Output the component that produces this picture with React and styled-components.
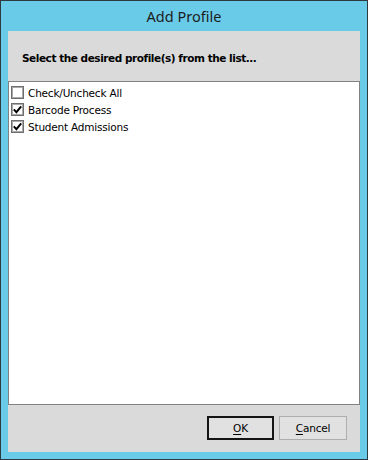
import styled, { createGlobalStyle } from "styled-components";

const GlobalStyle = createGlobalStyle`
  html, body {
    margin: 0;
    padding: 0;
    background: #69cbe8;
  }
  * {
    box-sizing: border-box;
  }
`;

const Window = styled.div`
  width: 368px;
  height: 460px;
  border: 1px solid #2d3b41;
  background: #69cbe8;
  display: flex;
  flex-direction: column;
  padding: 0 7px 7px 7px;
`;

const TitleBar = styled.div`
  height: 30px;
  display: flex;
  align-items: center;
  justify-content: center;
  font-family: "Noto Sans", "Open Sans", sans-serif;
  font-size: 14.5px;
  color: #1c1c1c;
  padding-bottom: 1px;
`;

const Client = styled.div`
  flex: 1;
  display: flex;
  flex-direction: column;
  background: #dadada;
  font-family: "DejaVu Sans", sans-serif;
  font-size: 10.5px;
  letter-spacing: -0.2px;
  color: #000;
`;

const Header = styled.div`
  height: 50px;
  display: flex;
  align-items: center;
  padding: 4px 0 0 14px;
  font-weight: bold;
  letter-spacing: -0.45px;
`;

const ListBox = styled.div`
  flex: 1;
  background: #fff;
  border: 1px solid #828282;
  padding: 2px 0 0 1px;
  display: flex;
  flex-direction: column;
`;

const Row = styled.label`
  height: 17px;
  display: flex;
  align-items: center;
  gap: 4px;
  padding-left: 1px;
`;

const Box = styled.span`
  width: 13px;
  height: 13px;
  border: 1px solid #6e6e6e;
  box-shadow: inset 0 0 0 1px #a9a9a9;
  background: #fff;
  display: flex;
  align-items: center;
  justify-content: center;
`;

const Footer = styled.div`
  height: 47px;
  display: flex;
  justify-content: flex-end;
  align-items: flex-start;
  gap: 5px;
  padding: 11px 13px 0 0;
`;

const Button = styled.button`
  width: ${(p) => (p.$primary ? "67px" : "68px")};
  height: 24px;
  background: #e1e1e1;
  border: ${(p) => (p.$primary ? "2px solid #141414" : "1px solid #adadad")};
  font-family: "DejaVu Sans", sans-serif;
  font-size: 10.5px;
  letter-spacing: -0.2px;
  color: #000;
  padding: 0;
  display: flex;
  align-items: center;
  justify-content: center;

  u {
    text-decoration: underline;
    text-underline-offset: 2px;
  }
`;

const Check = ({ checked }) => (
  <Box>
    {checked && (
      <svg width="9" height="9" viewBox="0 0 9 9">
        <path
          d="M0.8 4.4 L3.4 7.2 L8.2 1.4"
          fill="none"
          stroke="#000"
          strokeWidth="2"
        />
      </svg>
    )}
  </Box>
);

const items = [
  { label: "Check/Uncheck All", checked: false },
  { label: "Barcode Process", checked: true },
  { label: "Student Admissions", checked: true },
];

export default function App() {
  return (
    <>
      <GlobalStyle />
      <Window>
        <TitleBar>Add Profile</TitleBar>
        <Client>
          <Header>Select the desired profile(s) from the list...</Header>
          <ListBox>
            {items.map((it) => (
              <Row key={it.label}>
                <Check checked={it.checked} />
                <span>{it.label}</span>
              </Row>
            ))}
          </ListBox>
          <Footer>
            <Button $primary>
              <span>
                <u>O</u>K
              </span>
            </Button>
            <Button>
              <span>
                <u>C</u>ancel
              </span>
            </Button>
          </Footer>
        </Client>
      </Window>
    </>
  );
}
